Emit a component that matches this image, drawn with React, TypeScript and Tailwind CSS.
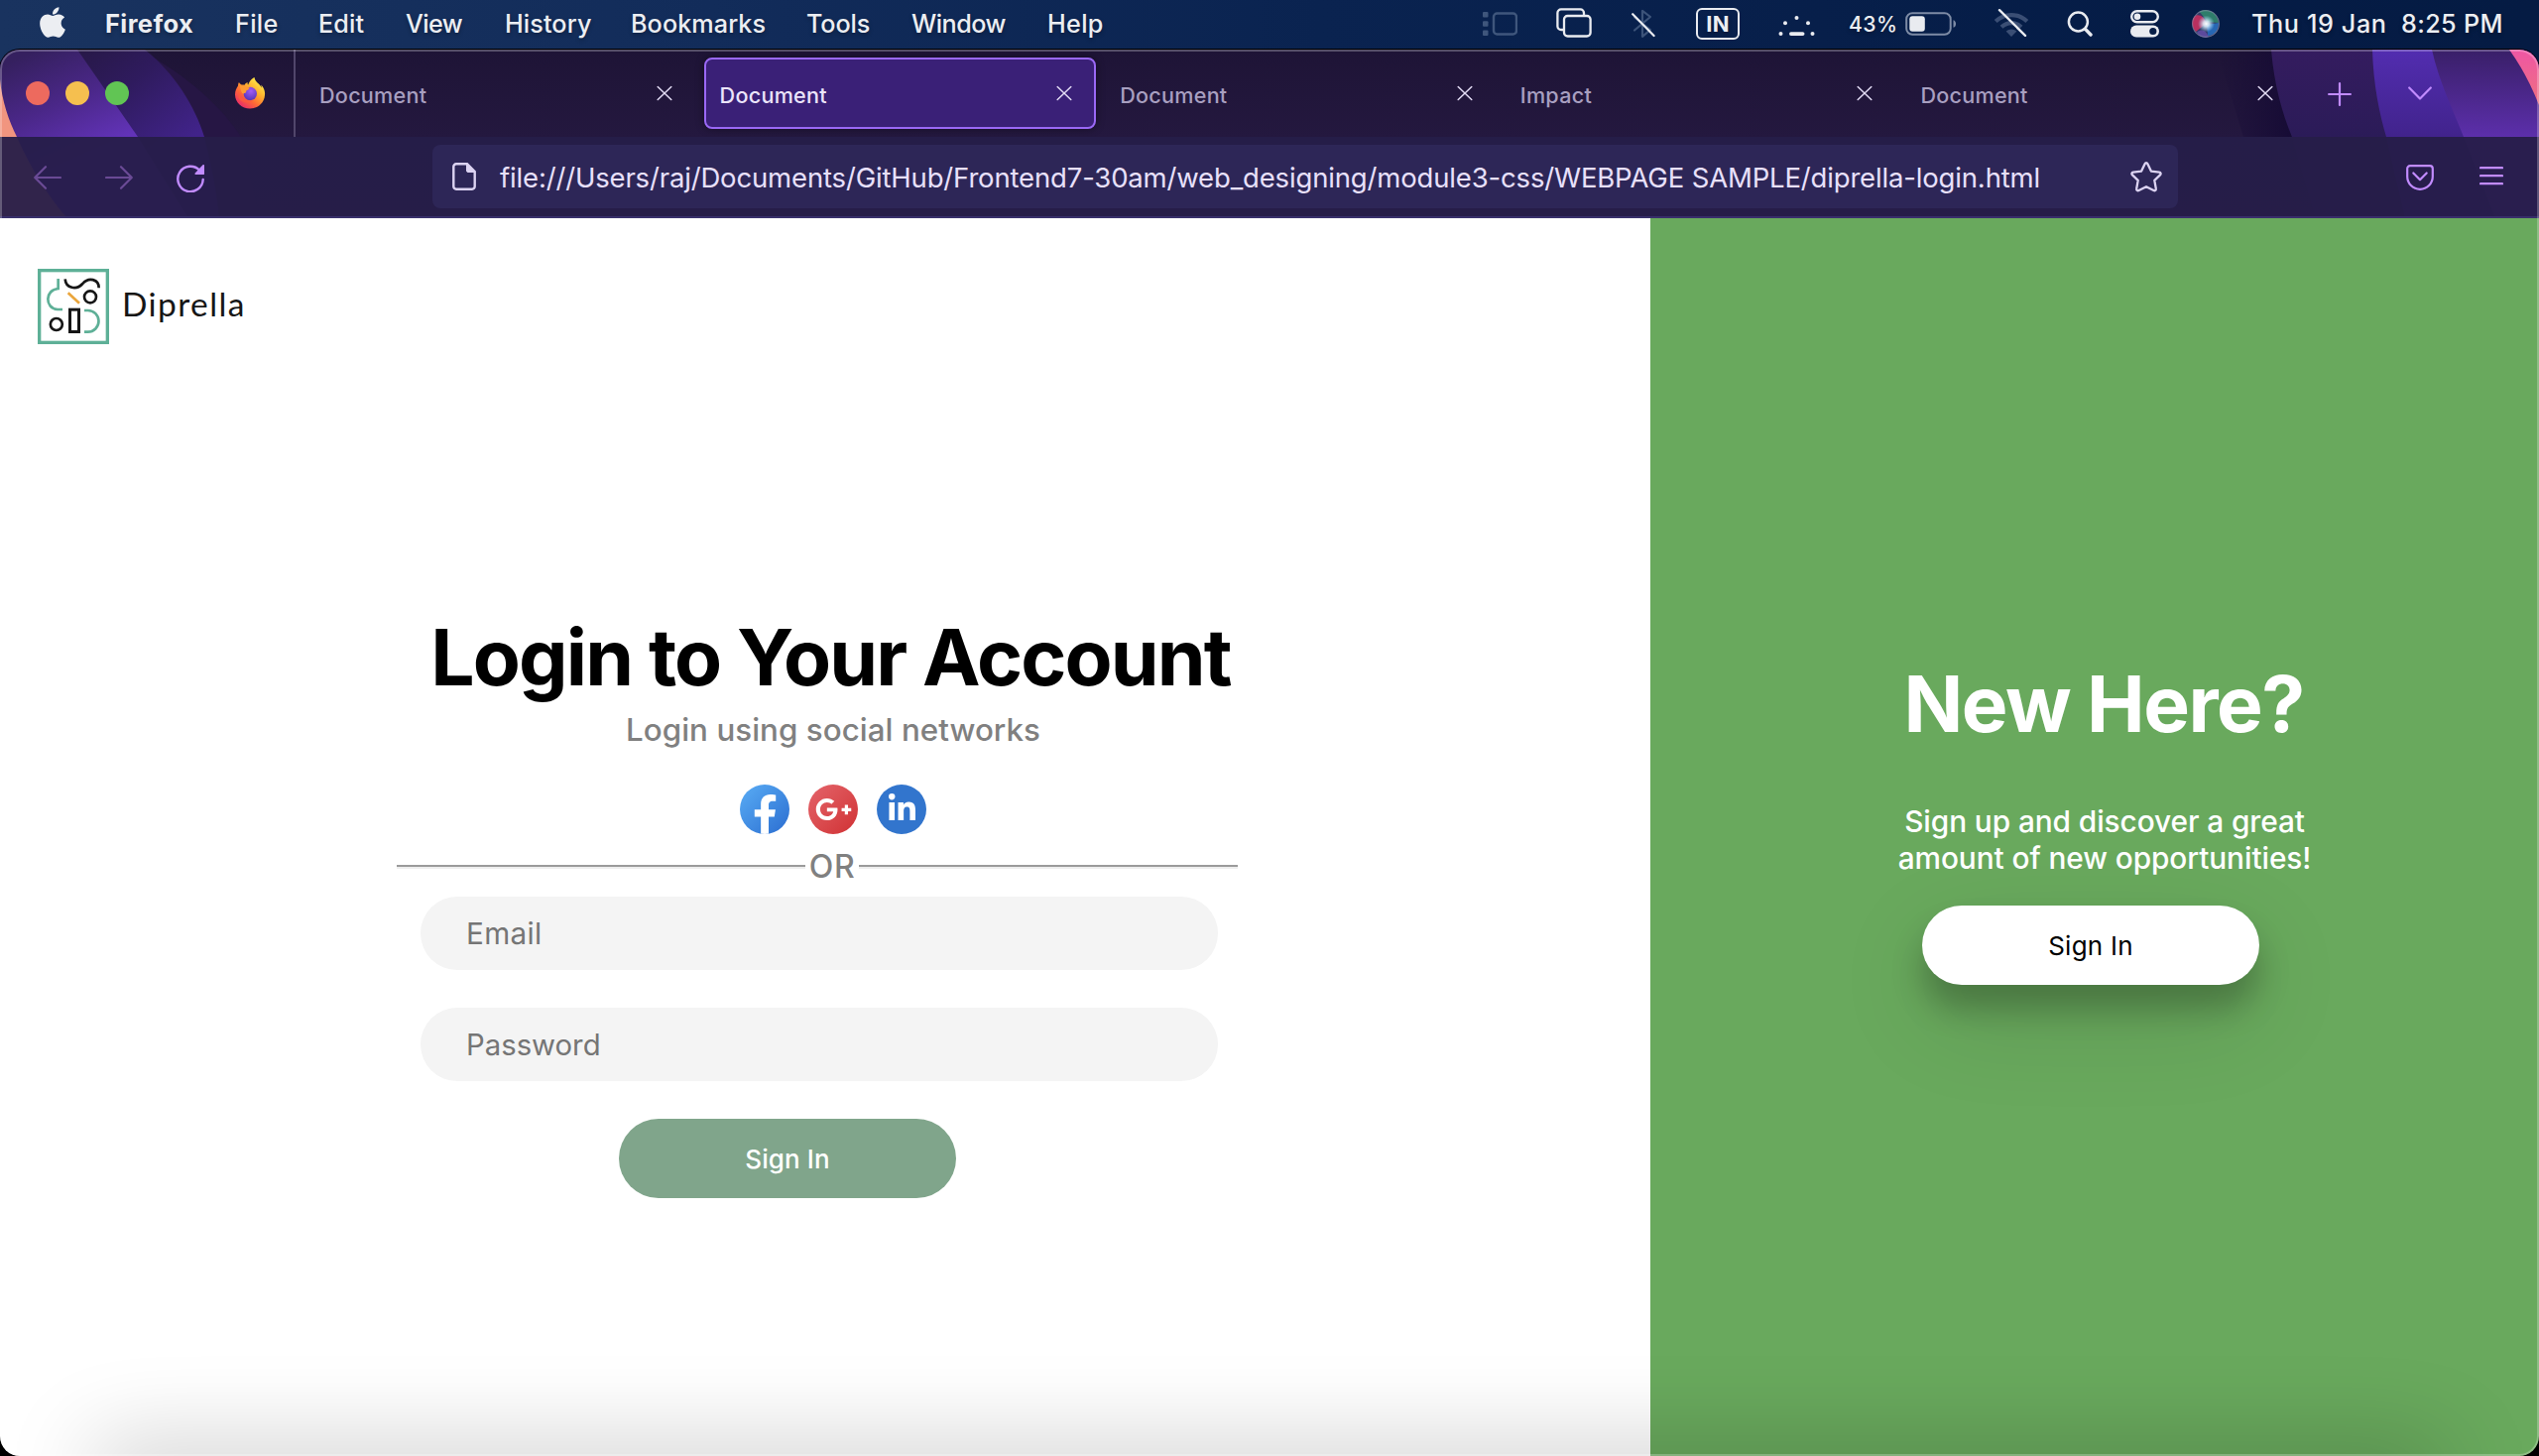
import React from 'react';
import { FaApple, FaFacebookF, FaGooglePlusG, FaLinkedinIn } from 'react-icons/fa';

function StageIcon() {
  return (
    <svg className="ml-[370px] h-6 w-[35px] text-[#3f567c]" viewBox="0 0 35 24" fill="none">
      <rect x="0" y="0" width="5.500" height="5.500" rx="1" fill="currentColor" />
      <rect x="0" y="9.300" width="5.500" height="5.500" rx="1" fill="currentColor" />
      <rect x="0" y="18.500" width="5.500" height="5.500" rx="1" fill="currentColor" />
      <rect x="11" y="1.500" width="23" height="21" rx="3.500" stroke="currentColor" strokeWidth="2.400" />
    </svg>
  );
}

function ScreensIcon() {
  return (
    <svg className="-mt-px ml-[39px] h-[30px] w-9" viewBox="0 0 36 30" fill="none" stroke="#e9ebf0" strokeWidth="2.300">
      <path d="M8 22H5a3.600 3.600 0 0 1-3.600-3.600V5A3.600 3.600 0 0 1 5 1.400h19.400A3.600 3.600 0 0 1 28 5v2.500" />
      <rect x="8" y="8" width="26.600" height="20.500" rx="3.600" />
    </svg>
  );
}

function BluetoothOffIcon() {
  return (
    <svg className="ml-10 h-[30px] w-6" viewBox="0 0 24 30" fill="none" strokeLinecap="round" strokeLinejoin="round">
      <path d="M3 21.500 19 8 11 1.800v26L19 21 3 8.500" stroke="#3c5379" strokeWidth="2.200" />
      <path d="M1.200 5.200 22.600 27" stroke="#e9ebf0" strokeWidth="2.200" />
    </svg>
  );
}

function DotsIcon() {
  return (
    <svg className="ml-[38px] mt-1 h-6 w-[38px]" viewBox="0 0 38 24" fill="#e9ebf0">
      <circle cx="19.500" cy="4" r="2" />
      <circle cx="8" cy="9.200" r="2" />
      <circle cx="31" cy="9.200" r="2" />
      <circle cx="3.500" cy="20" r="2" />
      <circle cx="35.500" cy="20" r="2" />
      <rect x="12" y="18.200" width="15.500" height="3.800" rx="1.900" />
    </svg>
  );
}

function BatteryIcon() {
  return (
    <svg className="h-6 w-[52px]" viewBox="0 0 52 24" fill="none">
      <rect x="1.200" y="1.200" width="44.500" height="21.600" rx="6" stroke="#7d8ba5" strokeWidth="2" />
      <rect x="4.300" y="4.300" width="15.500" height="15.400" rx="3" fill="#e9ebf0" />
      <path d="M48.500 8.200c3.400 1 3.400 6.600 0 7.600z" fill="#7d8ba5" />
    </svg>
  );
}

function WifiOffIcon() {
  return (
    <svg className="-mt-px ml-[37px] h-7 w-9" viewBox="0 0 36 28" fill="none">
      <path d="M2.200 12.500c9-8.600 22.600-8.600 31.600 0" stroke="#3a4e74" strokeWidth="4.200" />
      <path d="M8 18.300c6-5.500 14-5.500 20 0" stroke="#3a4e74" strokeWidth="4.200" />
      <path d="M18 28l-5.400-5.500c3.300-2.700 7.500-2.700 10.800 0z" fill="#3a4e74" />
      <path d="M6 1.200 32 26.800" stroke="#e9ebf0" strokeWidth="2.400" strokeLinecap="round" />
    </svg>
  );
}

function SearchIcon() {
  return (
    <svg className="ml-[38px] h-[27px] w-[27px]" viewBox="0 0 27 27" fill="none" stroke="#e9ebf0" strokeLinecap="round">
      <circle cx="11.400" cy="12" r="9.500" strokeWidth="2.500" />
      <path d="m18.600 19.400 5.400 5.600" strokeWidth="3.400" />
    </svg>
  );
}

function ControlCenterIcon() {
  return (
    <svg className="ml-[37px] h-7 w-[29px]" viewBox="0 0 29 28" fill="none">
      <rect x="1.200" y="1.200" width="26.600" height="11" rx="5.500" stroke="#e9ebf0" strokeWidth="2.400" />
      <circle cx="7" cy="6.700" r="3.300" fill="#e9ebf0" />
      <rect x="0" y="15.500" width="29" height="12" rx="6" fill="#e9ebf0" />
      <circle cx="22.800" cy="21.500" r="3.600" fill="#071e47" />
    </svg>
  );
}

function SiriIcon() {
  return (
    <svg className="ml-[33px] h-7 w-7" viewBox="0 0 28 28">
      <defs>
        <radialGradient id="siriGlow">
          <stop offset="0" stopColor="#fff" />
          <stop offset=".35" stopColor="#dff4ff" stopOpacity=".85" />
          <stop offset="1" stopColor="#9fd8ff" stopOpacity="0" />
        </radialGradient>
        <clipPath id="siriClip"><circle cx="14" cy="14" r="14" /></clipPath>
      </defs>
      <g clipPath="url(#siriClip)">
        <circle cx="14" cy="14" r="14" fill="#343a66" />
        <path d="M7 1c8-3 18 0 20 12l-11-1z" fill="#2f7d6b" />
        <path d="M2 7C6 3 13 6 14 14L4 22C0 18-1 11 2 7z" fill="#b8305f" />
        <path d="M15 15l12-2c0 8-5 13-11 13z" fill="#2767b4" />
        <path d="M5 22c5-3 9-2 12 5-5 2-10 0-12-5z" fill="#5c4a9c" />
        <circle cx="14.500" cy="14" r="8.500" fill="url(#siriGlow)" />
      </g>
      <circle cx="14" cy="14" r="13.400" fill="none" stroke="#8d93ab" strokeOpacity=".55" strokeWidth="1.100" />
    </svg>
  );
}

function MenuBar() {
  return (
    <header className="flex h-[46px] items-center whitespace-nowrap pt-px text-[25.2px] font-medium leading-[46px] text-[#eceef2] [text-shadow:0_2px_4px_rgba(0,0,0,0.3)]">
      <nav className="grid grid-cols-[66px_130px_84px_89px_99px_127px_178px_106px_136px_70px] items-center pl-10">
        <FaApple className="-ml-[2px] -mt-[3px] h-[35px] w-[30px]" />
        <span className="text-[25.5px] font-bold tracking-[0.4px]">Firefox</span>
        <span className="pl-px tracking-[0.3px]">File</span>
        <span className="pl-px tracking-[0.1px]">Edit</span>
        <span className="tracking-[-0.65px]">View</span>
        <span className="pl-px tracking-[0.09px]">History</span>
        <span className="pl-px tracking-[0.07px]">Bookmarks</span>
        <span className="tracking-[-0.11px]">Tools</span>
        <span className="tracking-[-0.5px]">Window</span>
        <span className="pl-px tracking-[0.3px]">Help</span>
      </nav>
      <StageIcon />
      <ScreensIcon />
      <BluetoothOffIcon />
      <span className="ml-[41px] flex h-8 w-11 items-center justify-center rounded-[6px] border-2 border-[#e9ebf0] text-[22px] font-bold leading-none tracking-[0.4px]">IN</span>
      <DotsIcon />
      <span className="ml-[33px] w-[58px] pl-px text-[21.2px] tracking-[0.4px]">43%</span>
      <BatteryIcon />
      <WifiOffIcon />
      <SearchIcon />
      <ControlCenterIcon />
      <SiriIcon />
      <span className="ml-8 w-[151px] tracking-[0.62px]">Thu 19 Jan</span>
      <span className="tracking-[0.35px]">8:25 PM</span>
    </header>
  );
}

function ThemeArt() {
  return (
    <svg className="absolute inset-0 h-[170px] w-full" viewBox="0 0 2560 170" preserveAspectRatio="none">
      <defs>
        <linearGradient id="strip" x1="0" y1="0" x2="0" y2="1">
          <stop offset="0" stopColor="#1e1436" />
          <stop offset=".52" stopColor="#24183f" />
          <stop offset="1" stopColor="#251a44" />
        </linearGradient>
        <linearGradient id="violet" x1="0.200" y1="0" x2="0.500" y2="0.600">
          <stop offset="0" stopColor="#35205f" />
          <stop offset=".5" stopColor="#4a2788" />
          <stop offset="1" stopColor="#6233b8" />
        </linearGradient>
        <linearGradient id="indigo" x1="0.200" y1="0" x2="0.800" y2="0.600">
          <stop offset="0" stopColor="#24173f" />
          <stop offset=".5" stopColor="#2f1b5e" />
          <stop offset="1" stopColor="#41238a" />
        </linearGradient>
        <linearGradient id="plum" x1="0" y1="0" x2="0" y2="1">
          <stop offset="0" stopColor="#341c5f" />
          <stop offset=".52" stopColor="#2b1b58" />
        </linearGradient>
        <linearGradient id="royal" x1="0" y1="0" x2="0" y2="1">
          <stop offset="0" stopColor="#522db0" />
          <stop offset=".52" stopColor="#41238c" />
        </linearGradient>
        <linearGradient id="orchid" x1="0" y1="0" x2="0" y2="1">
          <stop offset="0" stopColor="#391f68" />
          <stop offset=".52" stopColor="#5c2fab" />
        </linearGradient>
        <linearGradient id="pink" x1="0" y1="0" x2="0" y2="1">
          <stop offset="0" stopColor="#ee56a4" />
          <stop offset="1" stopColor="#ef7080" />
        </linearGradient>
        <linearGradient id="edge" x1="0" y1="0" x2="1" y2="0">
          <stop offset="0" stopColor="#160b35" stopOpacity="0" />
          <stop offset="1" stopColor="#160b35" />
        </linearGradient>
      </defs>
      <rect width="2560" height="170" fill="url(#strip)" />
      <path d="M140 0C190 26 225 60 243 88L262 170H0V0z" fill="#261644" />
      <path d="M146 0C176 24 196 56 206 88 214 120 219 148 221 170H0V0z" fill="url(#indigo)" />
      <path d="M0 0H78L139 88 190 170H0z" fill="url(#violet)" />
      <path d="M0 30C2 52 9 72 17 88 32 122 50 150 68 170H0z" fill="#f1957f" />
      <path d="M2235 0H2290L2311 88H2262z" fill="url(#edge)" />
      <path d="M2290 0C2293 36 2301 64 2311 88L2335 170H2560V0z" fill="url(#plum)" />
      <path d="M2392 0C2393 36 2399 64 2406 88L2425 170H2560V0z" fill="url(#royal)" />
      <path d="M2452 0C2459 32 2473 60 2484 88L2516 170H2560V0z" fill="url(#orchid)" />
      <path d="M2530 0C2543 18 2552 36 2560 56V0z" fill="url(#pink)" />
    </svg>
  );
}

function FirefoxLogo() {
  return (
    <svg className="ml-[106px] h-8 w-8" viewBox="0 0 32 32">
      <defs>
        <linearGradient id="foxBody" x1=".85" y1=".1" x2=".2" y2=".95">
          <stop offset="0" stopColor="#fff04a" />
          <stop offset=".35" stopColor="#ffb02e" />
          <stop offset=".65" stopColor="#ff6a35" />
          <stop offset="1" stopColor="#e82a6a" />
        </linearGradient>
        <radialGradient id="foxGlobe" cx=".55" cy=".3" r=".8">
          <stop offset="0" stopColor="#a45cf5" />
          <stop offset="1" stopColor="#4a2fb0" />
        </radialGradient>
      </defs>
      <path d="M20.500 0c.4 3 2 4.400 4 6.300C26 7.800 27 9 27.400 10.500c.3-1 .2-2-.2-3 3 3 4.200 6.500 3.800 10.500C30.300 26 24 31.500 16 31.500S1.200 25.500 1 17.500c0-4 1.300-6.500 3-9 0-1.300.2-2.400.9-3.500.8 1.300 1.600 2 2.800 2.600 1-.2 2 0 2.800.1.700-1.300 1.800-2.200 3.300-2.700-.4 1.200-.2 2 .4 2.600C15.200 4.500 17 2 20.500 0z" fill="url(#foxBody)" />
      <circle cx="16.300" cy="16.500" r="6.700" fill="url(#foxGlobe)" />
      <path d="M6 8c2 0 4.200.2 5.800 1.400.8.600 1.800.7 3.700.8-.2 1.900-1.800 2.600-3.300 3.400.2 1.700-.2 2.200-2 2.400C8.500 18 6.500 14 6 8z" fill="#ff9a33" />
      <path d="M4.500 13c1.500 8.500 8 12.500 15 9.500-3.500 4.800-12.500 4-15-2z" fill="#ff5a3c" fillOpacity=".75" />
    </svg>
  );
}

function CloseIcon() {
  return (
    <svg className="h-4 w-4" viewBox="0 0 16 16" stroke="#e3dcf5" strokeWidth="1.500" strokeLinecap="round">
      <path d="M1.200 1.500 14.800 14.500M14.800 1.500 1.200 14.500" />
    </svg>
  );
}

function Tab({ title, active = false }: { title: string; active?: boolean }) {
  return (
    <div
      className={
        active
          ? 'flex h-[72px] w-[395.6px] items-center justify-between rounded-[8px] border-2 border-[#9a68f5] bg-[#3a2077] pl-[14px] pr-[22px] text-[#ebe4fb] shadow-[0_0_8px_rgba(0,0,0,0.4)]'
          : 'flex h-[72px] w-[395.6px] items-center justify-between border-2 border-transparent pl-[14px] pr-[22px] text-[#a89fc0]'
      }
    >
      <span className="pt-1 text-[21.6px] font-[450] leading-8 tracking-[0.25px]">{title}</span>
      <CloseIcon />
    </div>
  );
}

function TabStrip() {
  return (
    <div className="relative flex h-[88px] items-center">
      <div className="flex gap-4 pl-[26px]">
        <span className="h-6 w-6 rounded-full bg-[#ed6a5e]" />
        <span className="h-6 w-6 rounded-full bg-[#f5bf4f]" />
        <span className="h-6 w-6 rounded-full bg-[#61c554]" />
      </div>
      <FirefoxLogo />
      <span className="ml-7 h-full w-[2px] bg-[#51466b]" />
      <div className="ml-2 flex gap-2">
        <Tab title="Document" />
        <Tab title="Document" active />
        <Tab title="Document" />
        <Tab title="Impact" />
        <Tab title="Document" />
      </div>
      <svg className="ml-[31px] mt-[2px] h-6 w-6" viewBox="0 0 24 24" stroke="#c18bff" strokeWidth="2.200" strokeLinecap="round">
        <path d="M12 1.100V22.900M1.100 12H22.900" />
      </svg>
      <svg className="ml-[57px] h-[14px] w-6" viewBox="0 0 24 14" fill="none" stroke="#c18bff" strokeWidth="2.200" strokeLinecap="round" strokeLinejoin="round">
        <path d="M1.200 1.500 12 12.500 22.800 1.500" />
      </svg>
    </div>
  );
}

function Toolbar() {
  return (
    <div className="relative flex h-[82px] items-start border-b-2 border-[#382f6b] bg-[#261e49]/95">
      <svg className="ml-[34px] mt-[29px] h-6 w-7" viewBox="0 0 28 24" fill="none" stroke="#6a4a95" strokeWidth="2.200" strokeLinecap="round" strokeLinejoin="round">
        <path d="M27 12H1.200M12 1.200 1.200 12 12 22.800" />
      </svg>
      <svg className="ml-11 mt-[29px] h-6 w-7" viewBox="0 0 28 24" fill="none" stroke="#6a4a95" strokeWidth="2.200" strokeLinecap="round" strokeLinejoin="round">
        <path d="M1 12H26.800M16 1.200 26.800 12 16 22.800" />
      </svg>
      <svg className="ml-11 mt-7 h-7 w-7" viewBox="0 0 28 28" fill="none">
        <path d="M23.300 5.800A12.700 12.700 0 1 0 26.700 15" stroke="#c18bff" strokeWidth="2.400" strokeLinecap="round" />
        <path d="M28 .8V9.200a.9.900 0 0 1-.9.900H19.300c-.8 0-1.200-.9-.6-1.500L26.500.3c.6-.6 1.500-.3 1.500.5z" fill="#c18bff" />
      </svg>
      <div className="ml-[230px] mt-2 flex h-16 w-[1760px] items-center rounded-[8px] bg-[#2d2657] pl-5 pr-4">
        <svg className="h-7 w-6" viewBox="0 0 24 28" fill="none">
          <path d="M4 1.300H15L22.700 9V24a2.700 2.700 0 0 1-2.700 2.700H4A2.700 2.700 0 0 1 1.300 24V4A2.700 2.700 0 0 1 4 1.300z" stroke="#dcd3f2" strokeWidth="2.400" />
          <path d="M14.500 1.300V8a1.500 1.500 0 0 0 1.500 1.500h6.700z" fill="#dcd3f2" stroke="#dcd3f2" />
        </svg>
        <span className="ml-6 w-[1553px] whitespace-nowrap pt-[2px] text-[27.5px] leading-9 tracking-[-0.162px] text-[#e8e0fb]">file:///Users/raj/Documents/GitHub/Frontend7-30am/web_designing/module3-css/WEBPAGE SAMPLE/diprella-login.html</span>
        <svg className="ml-auto h-[31px] w-8" viewBox="0 0 32 31" fill="none" stroke="#dcd3f2" strokeWidth="2.300" strokeLinejoin="round">
          <path d="M14.600 2.200c.6-1.300 2.200-1.300 2.800 0l3.500 7.400 8.200 1c1.500.2 2 1.700.9 2.800l-5.700 5.500 1.500 8.400c.3 1.400-1 2.400-2.300 1.700L16 25.200 8.500 29c-1.300.7-2.600-.3-2.300-1.700l1.500-8.400L2 13.400c-1.100-1.100-.6-2.600.9-2.800l8.200-1z" />
        </svg>
      </div>
      <svg className="ml-[230px] mt-7 h-[26px] w-7" viewBox="0 0 28 26" fill="none" stroke="#c18bff" strokeWidth="2.200" strokeLinecap="round" strokeLinejoin="round">
        <path d="M4 1.200h20a2.800 2.800 0 0 1 2.800 2.800v8a12.800 12.800 0 0 1-25.600 0V4A2.800 2.800 0 0 1 4 1.200z" />
        <path d="m7.300 8.500 6.700 6.700 6.700-6.700" />
      </svg>
      <svg className="ml-[46px] mt-[29px] h-5 w-6" viewBox="0 0 24 20" stroke="#c18bff" strokeWidth="2.200" strokeLinecap="round">
        <path d="M1 2.200H23M1 10.200H23M1 18.200H23" />
      </svg>
    </div>
  );
}

function DiprellaLogo() {
  return (
    <div className="flex items-center pl-[38px]">
      <svg className="h-[76px] w-[72px]" viewBox="114 93 216 228" fill="none">
        <rect x="119" y="98" width="206" height="218" stroke="#5eb097" strokeWidth="10" />
        <path d="M176 123V153C136 156 134 212 174 216H189" stroke="#5eb097" strokeWidth="8" />
        <path d="M255 219H266A32 32 0 0 1 266 284H255" stroke="#5eb097" strokeWidth="8" />
        <path d="M197 124C199 153 232 158 250 138 268 117 299 124 299 151" stroke="#161616" strokeWidth="8" />
        <circle cx="273" cy="178" r="18" stroke="#161616" strokeWidth="8" />
        <circle cx="170.500" cy="261" r="18" stroke="#161616" strokeWidth="8" />
        <rect x="211.500" y="216.500" width="27" height="67" stroke="#161616" strokeWidth="9" />
        <path d="M206 166 240 197" stroke="#eaa53b" strokeWidth="8" />
      </svg>
      <span className="ml-[13px] pb-[6px] font-[Lato,sans-serif] text-[33.5px] leading-10 tracking-[1.4px] text-[#161616]">Diprella</span>
    </div>
  );
}

function LoginPanel() {
  return (
    <section className="w-[1664px] bg-white pt-[51px]">
      <DiprellaLogo />
      <div className="ml-[400px] mt-[268px] flex w-[880px] flex-col items-center">
        <h1 className="whitespace-nowrap pr-[5px] text-[78.5px] font-bold leading-[96px] tracking-[-1.87px] text-black">Login to Your Account</h1>
        <p className="mt-[6px] text-[31.3px] font-[450] leading-[38px] tracking-[0.05px] text-[#808080]">Login using social networks</p>
        <div className="mt-9 flex gap-[19px] text-white">
          <span className="flex h-[50px] w-[50px] items-end justify-center overflow-hidden rounded-full bg-linear-to-br from-[#5aadf5] to-[#2c6dd0]">
            <FaFacebookF className="h-10 w-[25px]" />
          </span>
          <span className="flex h-[50px] w-[50px] items-center justify-center rounded-full bg-linear-to-br from-[#e4636a] to-[#d02f33]">
            <FaGooglePlusG className="h-[30px] w-[37px]" />
          </span>
          <span className="flex h-[50px] w-[50px] items-center justify-center rounded-full bg-[#3275cd]">
            <FaLinkedinIn className="-mt-[2px] h-[31px] w-[27px]" />
          </span>
        </div>
        <div className="mt-[15px] flex h-9 w-[848px] items-start self-start">
          <span className="mt-4 h-1 w-[412px] border-t-2 border-[#9b9b9b] bg-[#eee]" />
          <span className="w-[54px] text-center text-[32px] font-[450] leading-9 tracking-[0.5px] text-[#808080]">OR</span>
          <span className="mt-4 h-1 w-[382px] border-t-2 border-[#9b9b9b] bg-[#eee]" />
        </div>
        <input type="email" placeholder="Email" className="ml-6 mt-3 h-[74px] w-[804px] self-start rounded-full bg-[#f4f4f4] pl-[46px] text-[29.7px] tracking-[0.3px] placeholder:text-[#757575]" />
        <input type="password" placeholder="Password" className="ml-6 mt-[38px] h-[74px] w-[804px] self-start rounded-full bg-[#f4f4f4] pl-[46px] text-[29.3px] placeholder:text-[#757575]" />
        <button className="ml-[224px] mt-[38px] h-20 w-[340px] self-start rounded-full bg-[#80a58b] text-[26px] font-[450] tracking-[0.1px] text-white">Sign In</button>
      </div>
    </section>
  );
}

function SignUpPanel() {
  return (
    <section className="flex flex-1 flex-col items-center bg-[#69a95d] pl-5 pt-[442px] text-white">
      <h2 className="pr-[2px] text-[78.5px] font-bold leading-[96px] tracking-[-1.546px]">New Here?</h2>
      <p className="mt-[52px] text-center text-[29.8px] font-[450] leading-[37px] tracking-[-0.08px]">
        Sign up and discover a great
        <br />
        amount of new opportunities!
      </p>
      <button className="mr-7 mt-[29px] h-20 w-[340px] rounded-full bg-white text-[26px] tracking-[0.24px] text-black shadow-[0_24px_32px_0_rgba(0,0,0,0.24),0_34px_100px_0_rgba(0,0,0,0.12)]">Sign In</button>
    </section>
  );
}

export default function App() {
  return (
    <div className="flex h-[1468px] w-[2560px] flex-col overflow-hidden bg-black bg-[linear-gradient(90deg,#19335f_0%,#122c5a_28%,#0a2350_52%,#051c46_85%,#051b43_100%)] bg-[length:100%_90px] bg-no-repeat font-[Inter,sans-serif]">
      <MenuBar />
      <div className="relative mt-1 flex flex-1 flex-col overflow-hidden rounded-[20px] ring-1 ring-black">
        <ThemeArt />
        <TabStrip />
        <Toolbar />
        <main className="relative flex flex-1">
          <LoginPanel />
          <SignUpPanel />
          <div className="pointer-events-none absolute inset-x-[105px] top-full h-10 shadow-[0_0_90px_10px_rgba(0,0,0,0.22)]" />
        </main>
        <div className="pointer-events-none absolute inset-0 rounded-[20px] border-2 border-white/25" />
      </div>
    </div>
  );
}
